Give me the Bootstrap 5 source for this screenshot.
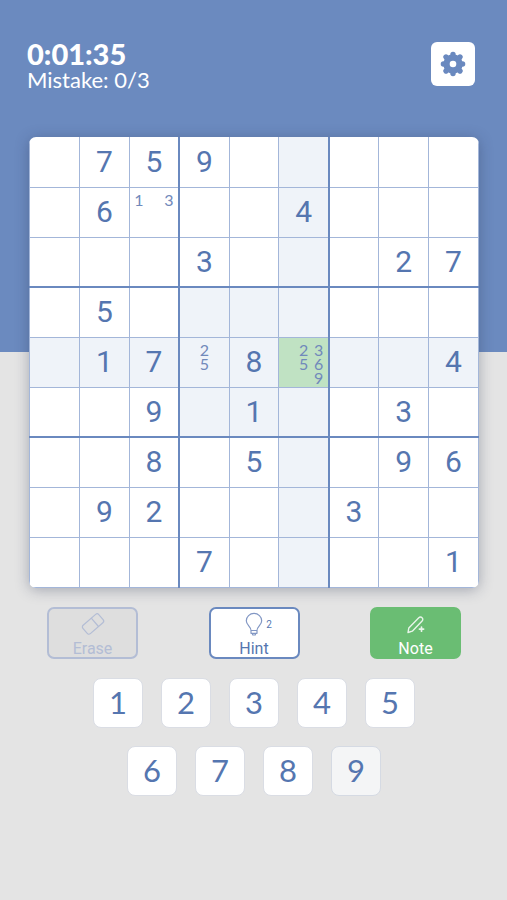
<!DOCTYPE html>
<html lang="en">
<head>
<meta charset="utf-8">
<meta name="viewport" content="width=device-width, initial-scale=1">
<title>Sudoku</title>
<link href="https://cdn.jsdelivr.net/npm/bootstrap@5.3.0/dist/css/bootstrap.min.css" rel="stylesheet">
<style>
:root { --ink: #5576b0; --line: #a3b6d9; --strong: #6a89bf; }
body { min-height: 100vh; color: var(--ink); font-family: Roboto, "Liberation Sans", sans-serif;
  background: linear-gradient(#6b8abf 352px, #e4e4e4 352px) no-repeat #e4e4e4; }
.game { max-width: 507px; padding: 40px 28px 24px 29px; }
.rounded-face { font-family: Lato, "Noto Sans", sans-serif; }
.topbar { height: 97px; padding: 0 4px 0 0; }
.status { margin-left: -2px; color: #fff; }
.timer { font-size: 29px; line-height: 28px; font-weight: 900; }
.mistakes { font-size: 22px; line-height: 24px; }
.gear { width: 44px; height: 44px; margin-top: 2px; background: #fff; border: 0; border-radius: 6px; color: var(--strong); }
.board { border-radius: 7px; overflow: hidden; background: #fff; box-shadow: 0 2px 14px rgba(40,50,80,.34); }
.board table { table-layout: fixed; border-collapse: collapse; }
.board td { height: 50px; padding: 0; text-align: center; vertical-align: middle; border: 1px solid var(--line);
  font-size: 30px; line-height: 36px; }
.board tr:first-child td { border-top: 0; }
.board td:nth-child(3n):not(:last-child) { border-right: 2px solid var(--strong); }
.board tr:nth-child(3n):not(:last-child) td { border-bottom: 2px solid var(--strong); }
.board td:nth-child(6), .board tr:nth-child(5) td,
.board tr:nth-child(n+4):nth-child(-n+6) td:nth-child(n+4):nth-child(-n+6) { background: #eff3f9; }
.board tr:nth-child(n+4):nth-child(-n+6) td.picked:nth-child(6) { background: #c0e2c3; }
.marks { display: grid; grid-template-columns: repeat(3, 15px); grid-template-rows: repeat(3, 14px);
  justify-content: center; padding-top: 4px; font: 16px/14px Lato, "Noto Sans", sans-serif; color: #7189bb; }
.c1 { grid-column: 1; } .c2 { grid-column: 2; } .c3 { grid-column: 3; }
.r1 { grid-row: 1; } .r2 { grid-row: 2; } .r3 { grid-row: 3; }
.actions { padding: 19px 18px; }
.tool { width: 91px; height: 52px; padding: 3px 0 0; border: 2px solid var(--strong); border-radius: 7px;
  background: #fff; color: var(--ink); font-size: 16px; line-height: 21px; }
.tool svg { display: block; }
.tool-icon { height: 26px; }
.tool:disabled { background: #dedede; border-color: #b3bdd5; color: #b3bdd5; }
.tool-on { background: #6abd73; border-color: #6abd73; color: #fff; }
.hints { font-size: 10px; line-height: 12px; width: 8px; }
.key { width: 50px; height: 50px; padding: 0 0 2px; border: 1px solid #dadde4; border-radius: 8px; background: #fff;
  color: var(--ink); font-size: 31px; line-height: 40px; }
.key-muted { background: #f4f5f6; border-color: #d5dae3; }
.keyrow { gap: 18px; }
</style>
<script src="https://cdn.jsdelivr.net/npm/bootstrap@5.3.0/dist/js/bootstrap.bundle.min.js"></script>
</head>
<body>
<main class="game mx-auto">
  <header class="topbar d-flex justify-content-between align-items-start">
    <div class="status rounded-face">
      <div class="timer">0:01:35</div>
      <div class="mistakes">Mistake: 0/3</div>
    </div>
    <button type="button" class="gear d-flex align-items-center justify-content-center" aria-label="Settings">
      <svg width="26" height="26" viewBox="0 0 26 26" aria-hidden="true">
        <g stroke="currentColor" stroke-width="5.4" stroke-linecap="round">
          <path d="M13 3.4v19.2M3.4 13h19.2M6 6l14 14M20 6L6 20"/>
        </g>
        <circle cx="13" cy="13" r="9.7" fill="currentColor"/>
        <circle cx="13" cy="13" r="3.3" fill="#fff"/>
      </svg>
    </button>
  </header>

  <div class="board">
    <table class="w-100" aria-label="Sudoku board">
      <tbody>
        <tr><td></td><td>7</td><td>5</td><td>9</td><td></td><td></td><td></td><td></td><td></td></tr>
        <tr><td></td><td>6</td><td><div class="marks"><span class="c1 r1">1</span><span class="c3 r1">3</span></div></td><td></td><td></td><td>4</td><td></td><td></td><td></td></tr>
        <tr><td></td><td></td><td></td><td>3</td><td></td><td></td><td></td><td>2</td><td>7</td></tr>
        <tr><td></td><td>5</td><td></td><td></td><td></td><td></td><td></td><td></td><td></td></tr>
        <tr><td></td><td>1</td><td>7</td><td><div class="marks"><span class="c2 r1">2</span><span class="c2 r2">5</span></div></td><td>8</td><td class="picked"><div class="marks"><span class="c2 r1">2</span><span class="c3 r1">3</span><span class="c2 r2">5</span><span class="c3 r2">6</span><span class="c3 r3">9</span></div></td><td></td><td></td><td>4</td></tr>
        <tr><td></td><td></td><td>9</td><td></td><td>1</td><td></td><td></td><td>3</td><td></td></tr>
        <tr><td></td><td></td><td>8</td><td></td><td>5</td><td></td><td></td><td>9</td><td>6</td></tr>
        <tr><td></td><td>9</td><td>2</td><td></td><td></td><td></td><td>3</td><td></td><td></td></tr>
        <tr><td></td><td></td><td></td><td>7</td><td></td><td></td><td></td><td></td><td>1</td></tr>
      </tbody>
    </table>
  </div>

  <div class="actions d-flex justify-content-between">
    <button type="button" class="tool d-flex flex-column align-items-center" disabled>
      <span class="tool-icon">
        <svg width="26" height="26" viewBox="0 0 26 26" fill="none" stroke="currentColor" stroke-width="1.2" stroke-linejoin="round" aria-hidden="true">
          <g transform="rotate(-41 13 12)"><rect x="2.5" y="6.5" width="21" height="11" rx="2.2"/><path d="M15.5 6.5v11"/></g>
        </svg>
      </span>
      <span>Erase</span>
    </button>
    <button type="button" class="tool d-flex flex-column align-items-center">
      <span class="tool-icon d-flex align-items-center">
        <span class="hints" aria-hidden="true"></span>
        <svg width="22" height="26" viewBox="0 0 22 26" fill="none" stroke="#8297c4" stroke-width="1.2" stroke-linejoin="round" stroke-linecap="round" aria-hidden="true">
          <path d="M8 18.5C8 14.5 3.3 13.3 3.3 8.8a7.7 7.4 0 0 1 15.4 0C18.7 13.3 14 14.5 14 18.5ZM8 18.5v2.8h6v-2.8M9.2 21.3l.6 1.7h2.400l.6-1.700"/>
        </svg>
        <span class="hints">2</span>
      </span>
      <span>Hint</span>
    </button>
    <button type="button" class="tool tool-on d-flex flex-column align-items-center">
      <span class="tool-icon">
        <svg width="22" height="26" viewBox="0 0 22 26" fill="none" stroke="currentColor" stroke-width="1.4" stroke-linejoin="round" stroke-linecap="round" opacity=".85" aria-hidden="true">
          <path d="M3 20.5l.8-4.500L13.800 5.700a2.300 2.300 0 0 1 3.300 0 2.300 2.300 0 0 1 0 3.300L7.300 19.200Z"/>
          <path d="M16.500 15v4.200M14.400 17.100h4.200" stroke-width="1.700"/>
        </svg>
      </span>
      <span>Note</span>
    </button>
  </div>

  <div class="rounded-face d-flex flex-column keyrow" role="group" aria-label="Number pad">
    <div class="d-flex justify-content-center keyrow">
      <button type="button" class="key">1</button>
      <button type="button" class="key">2</button>
      <button type="button" class="key">3</button>
      <button type="button" class="key">4</button>
      <button type="button" class="key">5</button>
    </div>
    <div class="d-flex justify-content-center keyrow">
      <button type="button" class="key">6</button>
      <button type="button" class="key">7</button>
      <button type="button" class="key">8</button>
      <button type="button" class="key key-muted">9</button>
    </div>
  </div>
</main>
</body>
</html>
